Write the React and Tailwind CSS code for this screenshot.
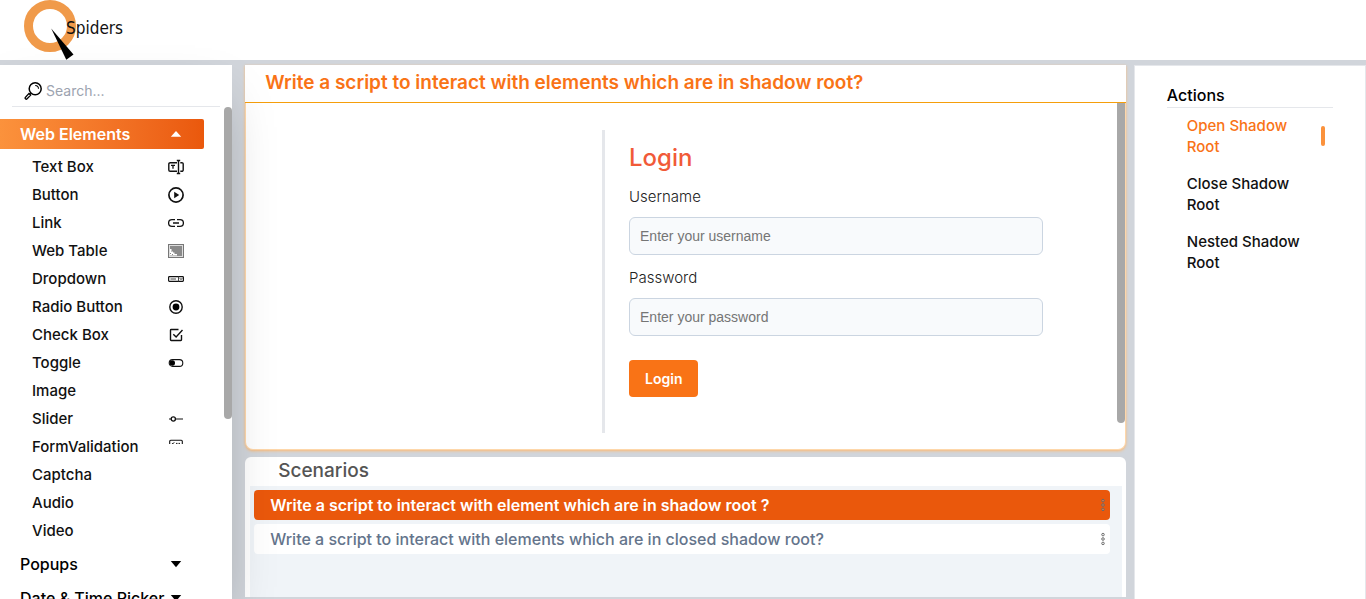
import { useState } from "react";

function Icon({ children }) {
  return (
    <svg viewBox="0 0 16 16" className="h-4 w-4 shrink-0" fill="none" stroke="#111" strokeWidth="1.4" aria-hidden="true">
      {children}
    </svg>
  );
}

const icons = {
  textBox: (
    <Icon>
      <path d="M9 3.7H2.2A1.4 1.4 0 0 0 .8 5.1v5.8a1.4 1.4 0 0 0 1.4 1.4H9M12.3 3.7h1.5a1.4 1.4 0 0 1 1.4 1.4v5.8a1.4 1.4 0 0 1-1.4 1.4h-1.5M10.5 1.5v13M8.8 1.5h3.4M8.8 14.5h3.4" />
      <path d="M3 6.3h4M5 6.3v3.5" strokeWidth="1.3" />
    </Icon>
  ),
  button: (
    <Icon>
      <circle cx="8" cy="8" r="7.1" strokeWidth="1.7" />
      <path d="M6.2 4.8v6.4L11.2 8z" fill="#111" stroke="none" />
    </Icon>
  ),
  link: (
    <Icon>
      <path d="M7 4.6H4A3.4 3.4 0 0 0 4 11.4h3M9 4.6h3a3.4 3.4 0 0 1 0 6.8H9M5 8h6" strokeWidth="1.3" />
    </Icon>
  ),
  table: (
    <Icon>
      <rect x="0" y="1" width="16" height="14" fill="#777" stroke="none" />
      <rect x="1.5" y="2.5" width="13" height="11" fill="#8a8a8a" stroke="#ddd" strokeWidth="1" />
      <path d="M2 6h1.5v2H5v1.5h1.5V11H9v1.5H2z" fill="#fff" stroke="none" />
      <path d="M2 10.5h1M4 11.5h1M3.5 8.5h1" stroke="#888" strokeWidth="1" />
    </Icon>
  ),
  dropdown: (
    <Icon>
      <rect x=".6" y="5.6" width="14.8" height="4.8" rx=".8" strokeWidth="1.2" />
      <path d="M10.5 5.6v4.8M2.5 8h5.5" strokeWidth="1" stroke="#444" />
      <path d="m11.8 7.2 1.2 1.4 1.2-1.4" strokeWidth=".9" />
    </Icon>
  ),
  radio: (
    <Icon>
      <circle cx="8" cy="8" r="6.2" />
      <circle cx="8" cy="8" r="3.4" fill="#000" stroke="none" />
    </Icon>
  ),
  check: (
    <Icon>
      <path d="M10.5 2.5H3.2a.7.7 0 0 0-.7.7v9.6c0 .4.3.7.7.7h9.6c.4 0 .7-.3.7-.7V8M5.3 7.2l2.8 2.8 6.4-6.9" />
    </Icon>
  ),
  toggle: (
    <Icon>
      <rect x="1.2" y="4.6" width="13.6" height="6.8" rx="3.4" strokeWidth="1.1" />
      <circle cx="4.3" cy="8" r="2.7" fill="#000" stroke="none" />
    </Icon>
  ),
  slider: (
    <Icon>
      <circle cx="5.3" cy="8" r="2.1" strokeWidth="1.3" />
      <path d="M1 8h2.2M7.4 8H15" strokeWidth="1.2" />
    </Icon>
  ),
  form: (
    <Icon>
      <path d="M1.7 5V2.3c0-.6.4-1 1-1h10.6c.6 0 1 .4 1 1V5" strokeWidth="1.1" />
      <path d="m4 4 .8.9L6.2 3.3M8 4.4h1.5M10.5 4.4H12" strokeWidth="1" />
    </Icon>
  ),
};

const elements = [
  ["Text Box", icons.textBox],
  ["Button", icons.button],
  ["Link", icons.link],
  ["Web Table", icons.table],
  ["Dropdown", icons.dropdown],
  ["Radio Button", icons.radio],
  ["Check Box", icons.check],
  ["Toggle", icons.toggle],
  ["Image", null],
  ["Slider", icons.slider],
  ["FormValidation", icons.form],
  ["Captcha", null],
  ["Audio", null],
  ["Video", null],
];

const actions = ["Open Shadow Root", "Close Shadow Root", "Nested Shadow Root"];

const scenarios = [
  "Write a script to interact with element which are in shadow root ?",
  "Write a script to interact with elements which are in closed shadow root?",
];

function Caret({ up }) {
  return (
    <svg viewBox="0 0 12 8" className="mr-[22px] h-2 w-3 shrink-0" fill="currentColor" aria-hidden="true">
      {up ? <path d="M.8 6.8 6 1l5.2 5.8z" /> : <path d="M.8 1h10.4L6 7.2z" />}
    </svg>
  );
}

function Header() {
  return (
    <header className="h-15 shrink-0 bg-white pl-6">
      <a href="#" className="flex h-full w-fit" aria-label="QSpiders">
        <svg viewBox="0 0 104 60" className="h-15 w-26">
          <circle cx="26" cy="26" r="21.5" fill="none" stroke="#f09a4a" strokeWidth="9" />
          <path d="M27.2 28.5 49.5 54.5 42.3 59.8z" fill="#000" />
          <text x="42" y="34" fontSize="17" fill="#111" className="font-['DejaVu_Sans_Condensed','DejaVu_Sans',sans-serif]">Spiders</text>
        </svg>
      </a>
    </header>
  );
}

function Sidebar() {
  return (
    <aside className="relative z-10 flex w-[17%] shrink-0 flex-col bg-white shadow-2xl">
      <div className="mx-3 flex h-[42px] shrink-0 items-center gap-1 border-b border-gray-200 pt-2.5 pl-3">
        <svg viewBox="0 0 18 18" className="h-[18px] w-[18px]" fill="none" stroke="#000" strokeWidth="1.5" aria-hidden="true">
          <circle cx="11.2" cy="6.8" r="6" />
          <path d="M11.2 3.5a3.4 3.4 0 0 1 3.3 3.3" strokeWidth="1.1" />
          <path d="m6.6 11.2-1 1" />
          <path d="m5 11.4 1.7 1.7-3.6 3.7c-.5.5-1.1.5-1.6 0s-.5-1.1 0-1.6z" strokeWidth="1.3" />
        </svg>
        <input aria-label="Search" placeholder="Search..." className="min-w-0 flex-1 bg-transparent text-sm outline-none placeholder:text-[#9ca3af]" />
      </div>
      <nav className="relative min-h-0 flex-1 overflow-hidden pt-3">
        <div className="absolute top-0 right-0 h-[312px] w-2 rounded-full bg-[#a8a8a8]" />
        <div className="mr-7 flex flex-col gap-1">
          <button className="flex h-[30px] items-center justify-between rounded-r-xs bg-linear-to-r from-[#fb923c] to-[#ea580c] pl-5 text-base font-semibold text-white">
            Web Elements
            <Caret up />
          </button>
          <ul>
            {elements.map(([name, icon]) => (
              <li key={name}>
                <a href="#" className="flex h-7 items-center justify-between pr-5 pl-8 text-[15px] font-medium text-[#111]">
                  {name}
                  {icon}
                </a>
              </li>
            ))}
          </ul>
          {["Popups", "Date & Time Picker"].map((name) => (
            <button key={name} className="flex h-[30px] shrink-0 items-center justify-between pl-5 text-base font-medium whitespace-nowrap text-black">
              {name}
              <Caret />
            </button>
          ))}
        </div>
      </nav>
    </aside>
  );
}

function Field({ id, label, type, placeholder }) {
  return (
    <div className="flex flex-col">
      <label htmlFor={id} className="mb-2.5 text-[15px] leading-[21px] font-light text-[#222]">{label}</label>
      <input
        id={id}
        type={type}
        placeholder={placeholder}
        className="mb-3 h-[38px] w-full rounded-md border border-[#cbd5e1] bg-[#f8fafc] px-2.5 font-['Liberation_Sans',Arial,sans-serif] text-sm outline-none placeholder:text-[#757575]"
      />
    </div>
  );
}

function Demo() {
  return (
    <section className="relative flex min-h-0 flex-1 flex-col rounded-b-lg border border-t-0 border-[#fed7aa] bg-white shadow-[0_1px_3px_#fdba74]">
      <h1 className="-mx-px flex h-[38px] shrink-0 items-center border-b border-[#f59e0b] bg-white px-5 text-[19px] font-semibold text-[#f97316]">
        Write a script to interact with elements which are in shadow root?
      </h1>
      <div className="relative flex min-h-0 flex-1 pt-[27px] pb-4">
        <div className="w-[40.5%] shrink-0" />
        <form className="flex-1 border-l-[3px] border-[#e5e7eb] pt-2.5 pr-[82px] pl-6" onSubmit={(e) => e.preventDefault()}>
          <h2 className="mb-2.5 text-2xl leading-9 font-medium text-[#f15a38]">Login</h2>
          <Field id="username" label="Username" type="text" placeholder="Enter your username" />
          <Field id="password" label="Password" type="password" placeholder="Enter your password" />
          <button className="mt-3 h-[37px] rounded bg-[#f97316] px-4 text-sm font-semibold text-white">Login</button>
        </form>
        <div className="absolute top-0 right-0 h-80 w-2 rounded-b-full bg-[#a8a8a8]" />
      </div>
    </section>
  );
}

function Scenarios() {
  const [selected, setSelected] = useState(0);
  return (
    <section className="mt-[7px] mb-0.5 flex h-[140px] shrink-0 flex-col rounded-t-md bg-white pr-1 pl-[5px]">
      <h2 className="flex h-[29px] shrink-0 items-center pl-7 text-[19px] font-medium text-[#555]">Scenarios</h2>
      <ul className="flex flex-1 flex-col gap-1 bg-[#f0f4f8] pt-1 pr-3 pl-1">
        {scenarios.map((text, i) => (
          <li key={text}>
            <button
              onClick={() => setSelected(i)}
              className={
                "flex h-[30px] w-full items-center justify-between rounded pr-1 pl-4 text-base " +
                (i === selected ? "bg-[#ea580c] font-semibold text-white" : "bg-white font-medium text-[#64748b]")
              }
            >
              {text}
              <svg viewBox="0 0 6 14" className="h-3.5 w-1.5 shrink-0" fill="#ccc" fillOpacity=".3" stroke="#666" strokeWidth=".9" aria-hidden="true">
                <circle cx="3" cy="2.6" r="1.3" />
                <circle cx="3" cy="7" r="1.3" />
                <circle cx="3" cy="11.4" r="1.3" />
              </svg>
            </button>
          </li>
        ))}
      </ul>
    </section>
  );
}

function Actions() {
  const [active, setActive] = useState(0);
  return (
    <aside className="w-[17%] shrink-0 border border-b-0 border-[#e5e7eb] bg-white px-8 pt-[18px]">
      <h2 className="border-b border-[#e5e7eb] pb-px text-base leading-[22px] font-medium text-black">Actions</h2>
      <ul className="flex flex-col gap-4 pt-[7px] pl-5">
        {actions.map((name, i) => (
          <li key={name}>
            <button
              onClick={() => setActive(i)}
              className={"flex w-full items-center justify-between pr-2 text-left text-[15px] leading-[21px] font-medium " + (i === active ? "text-[#f97316]" : "text-[#111]")}
            >
              <span className="w-[118px]">{name}</span>
              {i === active && <span className="h-5 w-1 rounded-sm bg-[#fb923c]" />}
            </button>
          </li>
        ))}
      </ul>
    </aside>
  );
}

export default function App() {
  return (
    <div className="flex h-screen flex-col overflow-hidden bg-[#d1d5db] font-['Inter',sans-serif]">
      <Header />
      <div className="flex min-h-0 flex-1 pt-[5px]">
        <Sidebar />
        <main className="mr-2 ml-[13px] flex min-w-0 flex-1 flex-col">
          <Demo />
          <Scenarios />
        </main>
        <Actions />
      </div>
    </div>
  );
}
